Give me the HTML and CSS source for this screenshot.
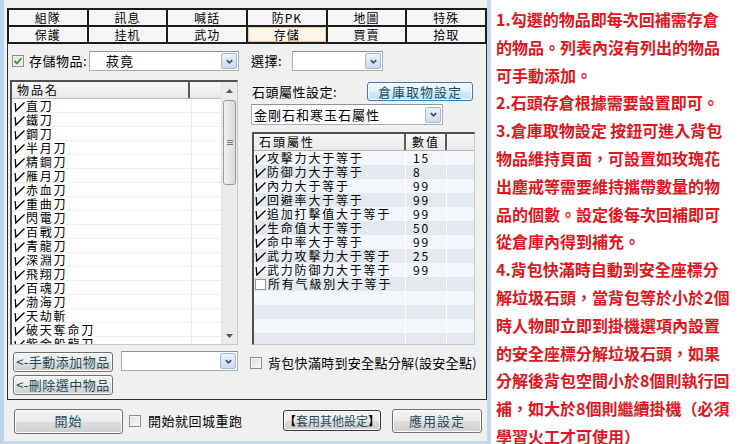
FILE: index.html
```html
<!DOCTYPE html>
<html>
<head>
<meta charset="utf-8">
<link rel="stylesheet" href="styles.css">
</head>
<body>
<div class="page">
  <div class="win">
    <div class="tabs">
      <div class="tab">組隊</div><div class="tab">訊息</div><div class="tab">喊話</div><div class="tab">防PK</div><div class="tab">地圖</div><div class="tab">特殊</div>
      <div class="tab">保護</div><div class="tab">挂机</div><div class="tab">武功</div><div class="tab sel">存儲</div><div class="tab">買賣</div><div class="tab">拾取</div>
    </div>
    <div class="group">
      <div class="cols">
        <div class="lcol">
          <div class="toprow">
            <span class="cbox cb-store"><svg viewBox="0 0 10 10" width="10" height="10"><polyline points="1.5,5 4,7.5 8.5,2" fill="none" stroke="#3a9a22" stroke-width="1.8"/></svg></span>
            <span class="lbl lbl-store">存儲物品:</span>
            <div class="combo combo-store"><span class="cv">菽竟</span><span class="dd"><svg viewBox="0 0 10 10" width="9" height="9"><polyline points="2,3.5 5,6.5 8,3.5" fill="none" stroke="#2c4f82" stroke-width="1.8"/></svg></span></div>
          </div>
          <div class="listbox">
            <div class="lmain">
              <div class="lhead"><div class="h1">物品名</div><div class="h2"></div></div>
              <div class="lrow"><div class="c1"><svg class="tk" viewBox="0 0 11 11"><polyline points="1.2,2 1.8,10 10.5,1.5" fill="none" stroke="#000" stroke-width="1.3"/></svg>直刀</div><div class="c2"></div></div>
              <div class="lrow"><div class="c1"><svg class="tk" viewBox="0 0 11 11"><polyline points="1.2,2 1.8,10 10.5,1.5" fill="none" stroke="#000" stroke-width="1.3"/></svg>鐵刀</div><div class="c2"></div></div>
              <div class="lrow"><div class="c1"><svg class="tk" viewBox="0 0 11 11"><polyline points="1.2,2 1.8,10 10.5,1.5" fill="none" stroke="#000" stroke-width="1.3"/></svg>鋼刀</div><div class="c2"></div></div>
              <div class="lrow"><div class="c1"><svg class="tk" viewBox="0 0 11 11"><polyline points="1.2,2 1.8,10 10.5,1.5" fill="none" stroke="#000" stroke-width="1.3"/></svg>半月刀</div><div class="c2"></div></div>
              <div class="lrow"><div class="c1"><svg class="tk" viewBox="0 0 11 11"><polyline points="1.2,2 1.8,10 10.5,1.5" fill="none" stroke="#000" stroke-width="1.3"/></svg>精鋼刀</div><div class="c2"></div></div>
              <div class="lrow"><div class="c1"><svg class="tk" viewBox="0 0 11 11"><polyline points="1.2,2 1.8,10 10.5,1.5" fill="none" stroke="#000" stroke-width="1.3"/></svg>雁月刀</div><div class="c2"></div></div>
              <div class="lrow"><div class="c1"><svg class="tk" viewBox="0 0 11 11"><polyline points="1.2,2 1.8,10 10.5,1.5" fill="none" stroke="#000" stroke-width="1.3"/></svg>赤血刀</div><div class="c2"></div></div>
              <div class="lrow"><div class="c1"><svg class="tk" viewBox="0 0 11 11"><polyline points="1.2,2 1.8,10 10.5,1.5" fill="none" stroke="#000" stroke-width="1.3"/></svg>重曲刀</div><div class="c2"></div></div>
              <div class="lrow"><div class="c1"><svg class="tk" viewBox="0 0 11 11"><polyline points="1.2,2 1.8,10 10.5,1.5" fill="none" stroke="#000" stroke-width="1.3"/></svg>閃電刀</div><div class="c2"></div></div>
              <div class="lrow"><div class="c1"><svg class="tk" viewBox="0 0 11 11"><polyline points="1.2,2 1.8,10 10.5,1.5" fill="none" stroke="#000" stroke-width="1.3"/></svg>百戰刀</div><div class="c2"></div></div>
              <div class="lrow"><div class="c1"><svg class="tk" viewBox="0 0 11 11"><polyline points="1.2,2 1.8,10 10.5,1.5" fill="none" stroke="#000" stroke-width="1.3"/></svg>青龍刀</div><div class="c2"></div></div>
              <div class="lrow"><div class="c1"><svg class="tk" viewBox="0 0 11 11"><polyline points="1.2,2 1.8,10 10.5,1.5" fill="none" stroke="#000" stroke-width="1.3"/></svg>深淵刀</div><div class="c2"></div></div>
              <div class="lrow"><div class="c1"><svg class="tk" viewBox="0 0 11 11"><polyline points="1.2,2 1.8,10 10.5,1.5" fill="none" stroke="#000" stroke-width="1.3"/></svg>飛翔刀</div><div class="c2"></div></div>
              <div class="lrow"><div class="c1"><svg class="tk" viewBox="0 0 11 11"><polyline points="1.2,2 1.8,10 10.5,1.5" fill="none" stroke="#000" stroke-width="1.3"/></svg>百魂刀</div><div class="c2"></div></div>
              <div class="lrow"><div class="c1"><svg class="tk" viewBox="0 0 11 11"><polyline points="1.2,2 1.8,10 10.5,1.5" fill="none" stroke="#000" stroke-width="1.3"/></svg>渤海刀</div><div class="c2"></div></div>
              <div class="lrow"><div class="c1"><svg class="tk" viewBox="0 0 11 11"><polyline points="1.2,2 1.8,10 10.5,1.5" fill="none" stroke="#000" stroke-width="1.3"/></svg>天劫斬</div><div class="c2"></div></div>
              <div class="lrow"><div class="c1"><svg class="tk" viewBox="0 0 11 11"><polyline points="1.2,2 1.8,10 10.5,1.5" fill="none" stroke="#000" stroke-width="1.3"/></svg>破天奪命刀</div><div class="c2"></div></div>
              <div class="lrow"><div class="c1"><svg class="tk" viewBox="0 0 11 11"><polyline points="1.2,2 1.8,10 10.5,1.5" fill="none" stroke="#000" stroke-width="1.3"/></svg>紫金般龍刀</div><div class="c2"></div></div>
            </div>
            <div class="vscroll">
              <div class="sb-btn sb-up"><svg viewBox="0 0 7 4" width="7" height="4"><polygon points="0,4 3.5,0 7,4" fill="#555"/></svg></div>
              <div class="sb-track">
                <div class="sb-thumb"><span class="grip"></span><span class="grip"></span><span class="grip"></span></div>
              </div>
              <div class="sb-btn sb-down"><svg viewBox="0 0 7 4" width="7" height="4"><polygon points="0,0 3.5,4 7,0" fill="#555"/></svg></div>
            </div>
          </div>
          <div class="addrow">
            <div class="btn btn-side">&lt;-手動添加物品</div>
            <div class="combo combo-add"><span class="dd"><svg viewBox="0 0 10 10" width="9" height="9"><polyline points="2,3.5 5,6.5 8,3.5" fill="none" stroke="#2c4f82" stroke-width="1.8"/></svg></span></div>
          </div>
          <div class="btn btn-side btn-del">&lt;-刪除選中物品</div>
        </div>

        <div class="rcol">
          <div class="toprow">
            <span class="lbl lbl-sel">選擇:</span>
            <div class="combo combo-sel"><span class="dd"><svg viewBox="0 0 10 10" width="9" height="9"><polyline points="2,3.5 5,6.5 8,3.5" fill="none" stroke="#2c4f82" stroke-width="1.8"/></svg></span></div>
          </div>
          <div class="attrhead">
            <span class="lbl lbl-attr">石頭屬性設定:</span>
            <div class="btn btn-focus">倉庫取物設定</div>
          </div>
          <div class="combo combo-stone"><span class="cv cv-stone">金剛石和寒玉石屬性</span><span class="dd"><svg viewBox="0 0 10 10" width="9" height="9"><polyline points="2,3.5 5,6.5 8,3.5" fill="none" stroke="#2c4f82" stroke-width="1.8"/></svg></span></div>
          <div class="grid">
            <div class="ghead"><div class="g1">石頭屬性</div><div class="g2">數值</div><div class="g3"></div></div>
            <div class="grow"><div class="g1"><svg class="tk" viewBox="0 0 11 11"><polyline points="1.2,2 1.8,10 10.5,1.5" fill="none" stroke="#000" stroke-width="1.3"/></svg>攻擊力大于等于</div><div class="g2">15</div><div class="g3"></div></div>
            <div class="grow"><div class="g1"><svg class="tk" viewBox="0 0 11 11"><polyline points="1.2,2 1.8,10 10.5,1.5" fill="none" stroke="#000" stroke-width="1.3"/></svg>防御力大于等于</div><div class="g2">8</div><div class="g3"></div></div>
            <div class="grow"><div class="g1"><svg class="tk" viewBox="0 0 11 11"><polyline points="1.2,2 1.8,10 10.5,1.5" fill="none" stroke="#000" stroke-width="1.3"/></svg>內力大于等于</div><div class="g2">99</div><div class="g3"></div></div>
            <div class="grow"><div class="g1"><svg class="tk" viewBox="0 0 11 11"><polyline points="1.2,2 1.8,10 10.5,1.5" fill="none" stroke="#000" stroke-width="1.3"/></svg>回避率大于等于</div><div class="g2">99</div><div class="g3"></div></div>
            <div class="grow"><div class="g1"><svg class="tk" viewBox="0 0 11 11"><polyline points="1.2,2 1.8,10 10.5,1.5" fill="none" stroke="#000" stroke-width="1.3"/></svg>追加打擊值大于等于</div><div class="g2">99</div><div class="g3"></div></div>
            <div class="grow"><div class="g1"><svg class="tk" viewBox="0 0 11 11"><polyline points="1.2,2 1.8,10 10.5,1.5" fill="none" stroke="#000" stroke-width="1.3"/></svg>生命值大于等于</div><div class="g2">50</div><div class="g3"></div></div>
            <div class="grow"><div class="g1"><svg class="tk" viewBox="0 0 11 11"><polyline points="1.2,2 1.8,10 10.5,1.5" fill="none" stroke="#000" stroke-width="1.3"/></svg>命中率大于等于</div><div class="g2">99</div><div class="g3"></div></div>
            <div class="grow"><div class="g1"><svg class="tk" viewBox="0 0 11 11"><polyline points="1.2,2 1.8,10 10.5,1.5" fill="none" stroke="#000" stroke-width="1.3"/></svg>武力攻擊力大于等于</div><div class="g2">25</div><div class="g3"></div></div>
            <div class="grow"><div class="g1"><svg class="tk" viewBox="0 0 11 11"><polyline points="1.2,2 1.8,10 10.5,1.5" fill="none" stroke="#000" stroke-width="1.3"/></svg>武力防御力大于等于</div><div class="g2">99</div><div class="g3"></div></div>
            <div class="grow"><div class="g1"><span class="ebox"></span>所有气級別大于等于</div><div class="g2"></div><div class="g3"></div></div>
            <div class="grow"><div class="g1"></div><div class="g2"></div><div class="g3"></div></div>
            <div class="grow"><div class="g1"></div><div class="g2"></div><div class="g3"></div></div>
            <div class="grow"><div class="g1"></div><div class="g2"></div><div class="g3"></div></div>
            <div class="grow"><div class="g1"></div><div class="g2"></div><div class="g3"></div></div>
          </div>
          <div class="checkrow">
            <span class="cbox"></span>
            <span class="lbl lbl-safe">背包快滿時到安全點分解(設安全點)</span>
          </div>
        </div>
      </div>
    </div>
    <div class="bottombar">
      <div class="btn btn-start">開始</div>
      <span class="cbox cb-back"></span>
      <span class="lbl lbl-back">開始就回城重跑</span>
      <div class="btn btn-other"><span class="br">【</span>套用其他設定<span class="br">】</span></div>
      <div class="btn btn-apply">應用設定</div>
    </div>
  </div>
  <div class="notes">
    <div class="ln">1.勾選的物品即每次回補需存倉</div>
    <div class="ln">的物品。列表內沒有列出的物品</div>
    <div class="ln">可手動添加。</div>
    <div class="ln">2.石頭存倉根據需要設置即可。</div>
    <div class="ln">3.倉庫取物設定 按鈕可進入背包</div>
    <div class="ln">物品維持頁面，可設置如玫瑰花</div>
    <div class="ln">出塵戒等需要維持攜帶數量的物</div>
    <div class="ln">品的個數。設定後每次回補即可</div>
    <div class="ln">從倉庫內得到補充。</div>
    <div class="ln">4.背包快滿時自動到安全座標分</div>
    <div class="ln">解垃圾石頭，當背包等於小於2個</div>
    <div class="ln">時人物即立即到掛機選項內設置</div>
    <div class="ln">的安全座標分解垃圾石頭，如果</div>
    <div class="ln">分解後背包空間小於8個則執行回</div>
    <div class="ln">補，如大於8個則繼續掛機（必須</div>
    <div class="ln">學習火工才可使用）</div>
  </div>
</div>
</body>
</html>
```

FILE: styles.css
```css
html, body {
  margin: 0;
  padding: 0;
}
body {
  width: 740px;
  height: 444px;
  overflow: hidden;
  background: #ffffff;
  font-family: "Noto Sans CJK TC", "Liberation Sans", sans-serif;
  font-size: 13px;
  color: #000;
}
.page {
  display: flex;
  height: 444px;
}

/* ---------- left window ---------- */
.win {
  width: 491px;
  height: 444px;
  box-sizing: border-box;
  background: #f0f0f0;
  border-left: 4px solid #bcd3ea;
  border-right: 4px solid #c3d8ec;
  border-bottom: 3px solid #c3d8ec;
  display: flex;
  flex-direction: column;
  flex: none;
}

.tabs {
  margin: 8px 0 0 3px;
  width: 480px;
  box-sizing: border-box;
  display: grid;
  grid-template-columns: repeat(6, 1fr);
  grid-auto-rows: 15px;
  gap: 2px;
  padding: 2px;
  background: #1c1c1c;
}
.tab {
  background: #f6f6f6;
  font-size: 12px;
  line-height: 15px;
  text-align: center;
  letter-spacing: 1px;
}
.tab.sel {
  background: #fcf5ea;
  box-shadow: inset 0 0 0 1px #f0c892;
}

.group {
  margin-left: 3px;
  width: 480px;
  height: 356px;
  box-sizing: border-box;
  border: 1px solid #2e2e2e;
  border-top: none;
  padding: 7px 0 0 2px;
}
.cols {
  display: flex;
  gap: 12px;
}
.lcol {
  width: 228px;
  display: flex;
  flex-direction: column;
}
.rcol {
  width: 226px;
  display: flex;
  flex-direction: column;
}

.toprow {
  height: 20px;
  display: flex;
  align-items: center;
}
.lbl {
  font-size: 13px;
  line-height: 16px;
  letter-spacing: 0.5px;
  white-space: nowrap;
}
.lbl-store { margin-left: 5px; width: 60px; }
.lbl-sel { margin-left: 1px; width: 41px; }

.cbox {
  width: 12px;
  height: 12px;
  box-sizing: border-box;
  border: 1px solid #8e8f8f;
  background: linear-gradient(135deg, #dcdcdc, #fbfbfb);
  box-shadow: inset 0 0 0 1px #f4f4f4;
  display: inline-flex;
  align-items: center;
  justify-content: center;
  flex: none;
}
.cb-store { margin-left: 2px; }

.combo {
  height: 20px;
  box-sizing: border-box;
  border: 1px solid #abadb3;
  border-top-color: #8f939c;
  background: #fff;
  display: flex;
  align-items: center;
  flex: none;
}
.combo .dd {
  margin-left: auto;
  margin-right: 1px;
  width: 16px;
  height: 16px;
  box-sizing: border-box;
  border: 1px solid #a3b9d7;
  border-radius: 2px;
  background: linear-gradient(#eaf1fb, #c9dbf1);
  display: flex;
  align-items: center;
  justify-content: center;
}
.cv {
  font-size: 13px;
  line-height: 16px;
  letter-spacing: 1px;
}
.combo-store { width: 150px; margin-right: -1px; }
.combo-store .cv { margin-left: 16px; }
.combo-sel { width: 91px; }

/* list box */
.listbox {
  margin-top: 9px;
  height: 265px;
  box-sizing: border-box;
  border-style: solid;
  border-width: 2px 1px 1px 2px;
  border-color: #505050 #c9c9c9 #c9c9c9 #505050;
  display: flex;
  background: #fff;
  overflow: hidden;
}
.lmain {
  width: 210px;
  overflow: hidden;
}
.lhead {
  display: flex;
  height: 17px;
  box-sizing: border-box;
  background: linear-gradient(#f7f7f7, #e9e9e9);
  border-bottom: 1px solid #b8b8b8;
}
.lhead .h1 {
  width: 178px;
  border-right: 2px solid #5a5a5a;
  padding-left: 5px;
  box-sizing: border-box;
  font-size: 12px;
  line-height: 16px;
  letter-spacing: 2px;
}
.lhead .h2 { flex: 1; }
.lrow {
  display: flex;
  height: 14px;
  box-shadow: inset 0 -1px 0 #efefef;
}
.c1 {
  width: 180px;
  box-sizing: border-box;
  border-right: 1px solid #ebebeb;
  display: flex;
  align-items: center;
  padding-left: 2px;
  font-size: 12px;
  line-height: 14px;
  letter-spacing: 1.8px;
  white-space: nowrap;
}
.c2 { flex: 1; }
.tk {
  width: 11px;
  height: 11px;
  flex: none;
  margin-right: 1px;
}

.vscroll {
  width: 15px;
  display: flex;
  flex-direction: column;
  background: #ebebeb;
  border-left: 1px solid #e2e2e2;
}
.sb-btn {
  height: 17px;
  display: flex;
  align-items: center;
  justify-content: center;
  flex: none;
}
.sb-track {
  flex: 1;
  padding-top: 1px;
}
.sb-thumb {
  margin: 0 1px;
  height: 85px;
  box-sizing: border-box;
  border: 1px solid #9b9b9b;
  border-radius: 3px;
  background: linear-gradient(90deg, #f2f2f2, #dadada);
  display: flex;
  flex-direction: column;
  align-items: center;
  justify-content: center;
  gap: 1px;
}
.grip {
  width: 6px;
  height: 1px;
  background: #7a7a7a;
}

.addrow {
  margin-top: 6px;
  height: 21px;
  display: flex;
  align-items: flex-start;
}
.btn {
  box-sizing: border-box;
  border: 1px solid #707070;
  border-radius: 3px;
  background: linear-gradient(#f3f3f3 0%, #ebebeb 50%, #dddddd 51%, #cfcfcf 100%);
  box-shadow: inset 0 0 0 1px #fcfcfc;
  color: #1d4e5c;
  font-size: 13px;
  line-height: 16px;
  letter-spacing: 1px;
  display: flex;
  align-items: center;
  justify-content: center;
  white-space: nowrap;
  flex: none;
}
.btn-side {
  width: 100px;
  height: 20px;
  margin-left: 3px;
  margin-top: 1px;
  letter-spacing: 0.5px;
}
.combo-add {
  width: 117px;
  margin-left: 8px;
}
.btn-del { margin-top: 3px; }

/* right column */
.attrhead {
  margin-top: 11px;
  height: 19px;
  display: flex;
  align-items: center;
}
.lbl-attr { margin-left: 2px; }
.btn-focus {
  margin-left: auto;
  margin-right: 3px;
  width: 106px;
  height: 19px;
  border-color: #3c7fb1;
  background: linear-gradient(#f1f8fd 0%, #e2f2fc 50%, #d2ebfb 51%, #bfe1f8 100%);
}
.combo-stone {
  margin-top: 3px;
  margin-left: 1px;
  width: 192px;
  height: 21px;
}
.cv-stone { margin-left: 2px; }

.grid {
  margin-top: 7px;
  margin-left: 2px;
  width: 223px;
  height: 213px;
  box-sizing: border-box;
  border-style: solid;
  border-width: 2px 1px 1px 2px;
  border-color: #505050 #c9c9c9 #c9c9c9 #505050;
  background: #fff;
  overflow: hidden;
}
.ghead {
  display: flex;
  height: 17px;
  box-sizing: border-box;
  background: linear-gradient(#f7f7f7, #e9e9e9);
  border-bottom: 1px solid #b8b8b8;
  font-size: 12px;
  line-height: 16px;
  letter-spacing: 2px;
}
.ghead .g1 {
  border-right: 2px solid #5a5a5a;
  padding-left: 5px;
}
.ghead .g2 {
  border-right: 2px solid #5a5a5a;
  padding-left: 6px;
}
.g1 {
  width: 152px;
  box-sizing: border-box;
  display: flex;
  align-items: center;
  white-space: nowrap;
}
.g2 {
  width: 41px;
  box-sizing: border-box;
  padding-left: 7px;
}
.g3 { flex: 1; }
.grow {
  display: flex;
  height: 14px;
  font-size: 12px;
  line-height: 14px;
  letter-spacing: 1.8px;
  background: #f3f6fa;
}
.grow:nth-child(odd) {
  background: #e4e8ef;
}
.grow .g1 {
  padding-left: 1px;
  border-right: 1px solid #ffffff;
}
.grow .g2 {
  border-right: 1px solid #ffffff;
}
.ebox {
  width: 11px;
  height: 11px;
  box-sizing: border-box;
  border: 1px solid #9a9a9a;
  background: #fff;
  margin-right: 2px;
  flex: none;
}

.checkrow {
  margin-top: 11px;
  height: 13px;
  display: flex;
  align-items: center;
}
.lbl-safe { margin-left: 6px; letter-spacing: 0.3px; }

/* bottom bar */
.bottombar {
  height: 41px;
  display: flex;
  align-items: center;
  padding: 0 5px 0 10px;
}
.btn-start {
  width: 109px;
  height: 25px;
  margin-top: 1px;
}
.cb-back { margin-left: 6px; }
.lbl-back { margin-left: 7px; }
.btn-other {
  margin-left: auto;
  width: 98px;
  height: 21px;
  font-size: 12px;
  letter-spacing: 0;
  border-color: #3a3a3a;
}
.btn-other .br {
  color: #000;
  font-weight: bold;
}
.btn-apply {
  margin-left: 11px;
  width: 90px;
  height: 24px;
}

/* notes */
.notes {
  flex: 1;
  background: #ffffff;
  padding: 6px 0 0 5px;
  color: #e0151d;
  font-family: "Noto Sans CJK TC", "Liberation Sans", sans-serif;
  font-weight: bold;
  font-size: 16px;
  line-height: 27.8px;
  white-space: nowrap;
  overflow: hidden;
}
.ln {
  height: 27.8px;
}
```
